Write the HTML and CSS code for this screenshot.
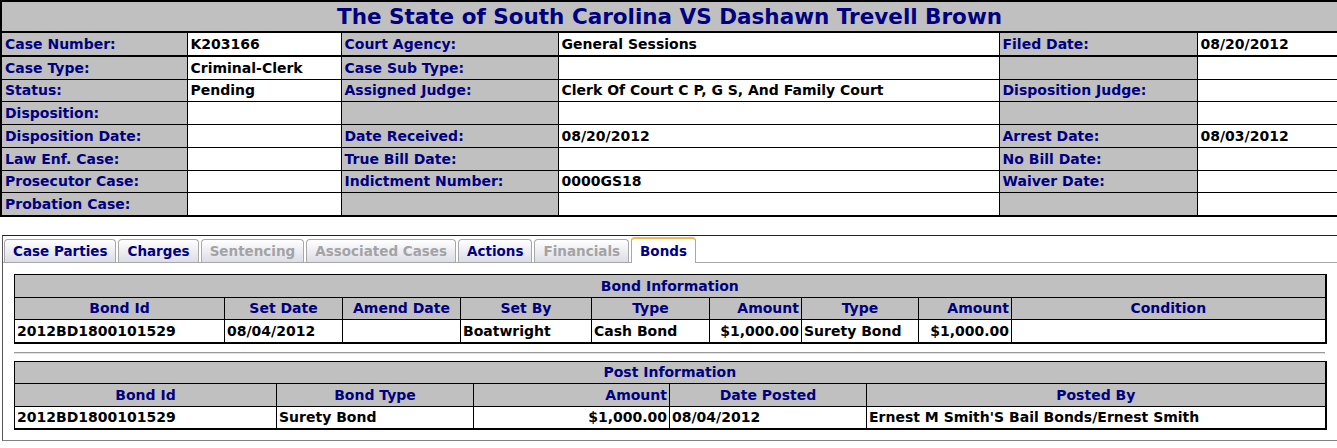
FILE: index.html
```html
<!DOCTYPE html>
<html lang="en">
<head>
  <meta charset="UTF-8" />
  <title>Case Details</title>
  <link rel="stylesheet" href="styles.css">
</head>
<body>

  <table class="case">
    <colgroup>
      <col style="width:186px"><col style="width:154px"><col style="width:217px">
      <col style="width:441px"><col style="width:198px"><col style="width:141px">
    </colgroup>
    <tr>
      <td class="title" colspan="6">The State of South Carolina VS Dashawn Trevell Brown</td>
    </tr>
    <tr class="first">
      <td class="label">Case Number:</td><td>K203166</td>
      <td class="label">Court Agency:</td><td>General Sessions</td>
      <td class="label">Filed Date:</td><td>08/20/2012</td>
    </tr>
    <tr>
      <td class="label">Case Type:</td><td>Criminal-Clerk</td>
      <td class="label">Case Sub Type:</td><td></td>
      <td class="label"></td><td></td>
    </tr>
    <tr>
      <td class="label">Status:</td><td>Pending</td>
      <td class="label">Assigned Judge:</td><td>Clerk Of Court C P, G S, And Family Court</td>
      <td class="label">Disposition Judge:</td><td></td>
    </tr>
    <tr>
      <td class="label">Disposition:</td><td></td>
      <td class="label"></td><td></td>
      <td class="label"></td><td></td>
    </tr>
    <tr>
      <td class="label">Disposition Date:</td><td></td>
      <td class="label">Date Received:</td><td>08/20/2012</td>
      <td class="label">Arrest Date:</td><td>08/03/2012</td>
    </tr>
    <tr>
      <td class="label">Law Enf. Case:</td><td></td>
      <td class="label">True Bill Date:</td><td></td>
      <td class="label">No Bill Date:</td><td></td>
    </tr>
    <tr>
      <td class="label">Prosecutor Case:</td><td></td>
      <td class="label">Indictment Number:</td><td>0000GS18</td>
      <td class="label">Waiver Date:</td><td></td>
    </tr>
    <tr>
      <td class="label">Probation Case:</td><td></td>
      <td class="label"></td><td></td>
      <td class="label"></td><td></td>
    </tr>
  </table>

  <div class="tabs">
    <ul class="tabs-nav">
      <li><a href="#">Case Parties</a></li>
      <li><a href="#">Charges</a></li>
      <li class="disabled"><a href="#">Sentencing</a></li>
      <li class="disabled"><a href="#">Associated Cases</a></li>
      <li><a href="#">Actions</a></li>
      <li class="disabled"><a href="#">Financials</a></li>
      <li class="active"><a href="#">Bonds</a></li>
    </ul>

    <div class="panel">
      <table class="grid">
        <colgroup>
          <col style="width:210px"><col style="width:118px"><col style="width:118px">
          <col style="width:131px"><col style="width:118px"><col style="width:92px">
          <col style="width:117px"><col style="width:93px"><col style="width:314px">
        </colgroup>
        <tr><th class="caption" colspan="9">Bond Information</th></tr>
        <tr>
          <th>Bond Id</th><th>Set Date</th><th>Amend Date</th><th>Set By</th>
          <th>Type</th><th class="num">Amount</th><th>Type</th><th class="num">Amount</th>
          <th>Condition</th>
        </tr>
        <tr>
          <td>2012BD1800101529</td><td>08/04/2012</td><td></td><td>Boatwright</td>
          <td>Cash Bond</td><td class="num">$1,000.00</td><td>Surety Bond</td>
          <td class="num">$1,000.00</td><td></td>
        </tr>
      </table>

      <hr>

      <table class="grid">
        <colgroup>
          <col style="width:262px"><col style="width:197px"><col style="width:196px">
          <col style="width:197px"><col style="width:459px">
        </colgroup>
        <tr><th class="caption" colspan="5">Post Information</th></tr>
        <tr>
          <th>Bond Id</th><th>Bond Type</th><th class="num">Amount</th>
          <th>Date Posted</th><th>Posted By</th>
        </tr>
        <tr>
          <td>2012BD1800101529</td><td>Surety Bond</td><td class="num">$1,000.00</td>
          <td>08/04/2012</td><td>Ernest M Smith'S Bail Bonds/Ernest Smith</td>
        </tr>
      </table>
    </div>
  </div>

</body>
</html>
```

FILE: styles.css
```css
body {
  margin: 0;
  font-family: 'DejaVu Sans', Verdana, sans-serif;
  font-size: 14px;
  font-weight: bold;
  color: #000;
  background: #fff;
}
table {
  border-collapse: collapse;
  table-layout: fixed;
}
.case {
  width: 100%;
  border: 2px solid #000;
}
.case td {
  border: 1px solid #000;
  height: 21.75px;
  padding: 0 3px;
  white-space: nowrap;
  overflow: hidden;
}
.case .title {
  height: 29px;
  background: #c0c0c0;
  color: #000080;
  font-size: 21.5px;
  text-align: center;
  border-bottom: 2px solid #000;
}
.case .first td {
  border-bottom: 2px solid #000;
}
.case .label {
  background: #c0c0c0;
  color: #000080;
}
.tabs {
  margin: 18px 0 0 2px;
  border: 1px solid #222;
  border-right: 0;
  border-bottom-color: #808080;
  border-left-color: #555;
}
.tabs-nav {
  display: flex;
  align-items: flex-end;
  gap: 2px;
  list-style: none;
  margin: 0;
  padding: 1px 0 0 1px;
  border-bottom: 1px solid #a8a8a8;
  font-size: 13.5px;
}
.tabs-nav li {
  border: 1px solid #a8a8a8;
  border-bottom: 0;
  border-radius: 4px 4px 0 0;
  background: linear-gradient(#ffffff, #dcdde6);
}
.tabs-nav a {
  display: block;
  padding: 2px 8px;
  line-height: 18px;
  color: #000080;
  text-decoration: none;
}
.tabs-nav .disabled a {
  color: #a3a3a3;
}
.tabs-nav .active {
  background: #fff;
  border-top: 2px solid #f5b751;
  margin-bottom: -1px;
}
.tabs-nav .active a {
  padding-top: 3px;
  padding-bottom: 3px;
}
.panel {
  padding: 11px 12px 10px 11px;
}
.grid {
  width: 1311px;
  border-top: 1px solid #000;
  border-left: 1px solid #000;
  border-right: 2px solid #000;
  border-bottom: 2px solid #000;
}
.grid th,
.grid td {
  border: 1px solid #000;
  height: 21.5px;
  padding: 0 2px;
  white-space: nowrap;
  overflow: hidden;
}
.grid th {
  background: #c0c0c0;
  color: #000080;
  text-align: center;
}
.grid td {
  text-align: left;
}
.grid .num {
  text-align: right;
}
hr {
  margin: 8px 0 7px;
  border: 0;
  border-top: 1px solid #9a9a9a;
  border-bottom: 1px solid #e2e2e2;
}
```
